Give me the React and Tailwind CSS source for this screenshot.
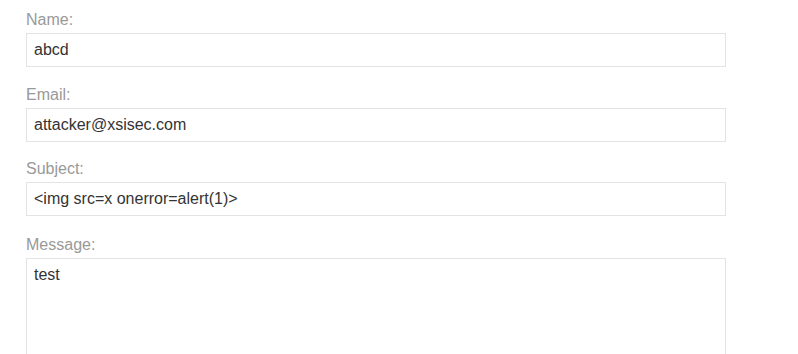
const fields = [
  { label: "Name:", value: "abcd" },
  { label: "Email:", value: "attacker@xsisec.com" },
  { label: "Subject:", value: "<img src=x onerror=alert(1)>" },
];

export default function App() {
  return (
    <div
      className="min-h-screen bg-white pt-[10px] pl-[26px]"
      style={{ fontFamily: '"Liberation Sans", Arial, sans-serif' }}
    >
      <form className="w-[700px]" onSubmit={(e) => e.preventDefault()}>
        {fields.map((f, i) => (
          <div key={f.label} className={i === 1 ? "mb-[17px]" : "mb-[18px]"}>
            <label className="block h-[20px] text-[16px] leading-[20px] text-[#999999] mb-[3px]">
              {f.label}
            </label>
            <input
              type="text"
              defaultValue={f.value}
              className="block w-full h-[34px] px-[7px] border border-[#e3e3e3] bg-white text-[16px] text-[#333333] outline-none"
            />
          </div>
        ))}
        <div className="pt-[1px]">
          <label className="block h-[20px] text-[16px] leading-[20px] text-[#999999] mb-[3px]">
            Message:
          </label>
          <textarea
            defaultValue="test"
            className="block w-full h-[150px] px-[7px] py-[6px] border border-[#e3e3e3] bg-white text-[16px] leading-[20px] text-[#333333] outline-none resize-none"
          />
        </div>
      </form>
    </div>
  );
}
